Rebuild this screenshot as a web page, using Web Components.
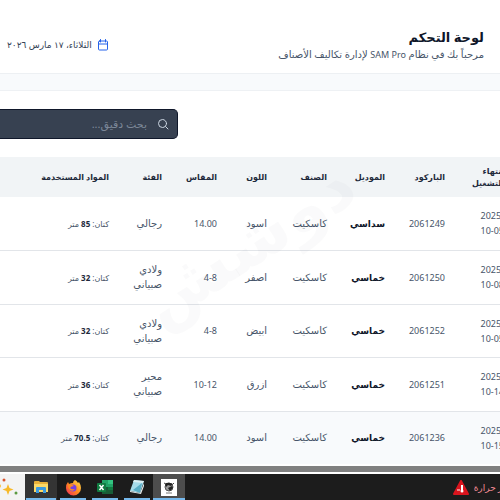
<!DOCTYPE html>
<html lang="ar" dir="rtl">
<head>
<meta charset="utf-8">
<title>لوحة التحكم</title>
<style>
  html, body {
    margin: 0;
    height: 100%;
    overflow: hidden;
  }
  body {
    font-family: "Noto Sans", "DejaVu Sans", sans-serif;
    font-size: 10px;
    color: #475569;
    background: #fff;
  }
  .latin {
    font-size: 9px;
  }
</style>
</head>
<body>
<app-shell>
  <page-header slot="header">
    <span slot="title">لوحة التحكم</span>
    <span slot="subtitle">مرحباً بك في نظام <span class="latin">SAM Pro</span> لإدارة تكاليف الأصناف</span>
    <span slot="date">الثلاثاء، ١٧ مارس ٢٠٢٦</span>
  </page-header>
  <search-box placeholder="بحث دقيق..."></search-box>
  <items-table></items-table>
  <task-bar slot="footer"></task-bar>
</app-shell>

<script>
/**
 * Creates a template from a markup string.
 *
 * @param {string} markup The markup.
 * @returns {HTMLTemplateElement} The template.
 */
const createTemplate = (markup) => {
  const template = document.createElement('template')
  template.innerHTML = markup
  return template
}

const shellTemplate = createTemplate(`
  <style>
    :host {
      display: flex;
      flex-direction: column;
      height: 100vh;
      background: #f8fafc;
    }
    main {
      flex: 1;
      min-height: 0;
      overflow: hidden;
      margin-top: 16px;
      border-top: 1px solid #eef1f4;
      background: #fff;
    }
  </style>
  <slot name="header"></slot>
  <main><slot></slot></main>
  <slot name="footer"></slot>
`)

/**
 * The frame of the page: header, content and footer.
 */
class AppShell extends HTMLElement {
  constructor () {
    super()
    this.attachShadow({ mode: 'open' })
    this.shadowRoot.appendChild(shellTemplate.content.cloneNode(true))
  }
}
customElements.define('app-shell', AppShell)

const headerTemplate = createTemplate(`
  <style>
    :host {
      display: block;
      background: #fff;
      border-bottom: 1px solid #edf0f3;
    }
    header {
      display: flex;
      align-items: center;
      justify-content: space-between;
      padding: 27px 16px 11px 7px;
    }
    h1 {
      margin: 0;
      font-size: 13px;
      line-height: 20px;
      font-weight: 700;
      color: #0f172a;
    }
    p {
      margin: 0;
      font-size: 10px;
      line-height: 14px;
    }
    .date {
      display: flex;
      align-items: center;
      gap: 5px;
      font-size: 9px;
      line-height: 14px;
      color: #334155;
    }
  </style>
  <header>
    <div>
      <h1><slot name="title"></slot></h1>
      <p><slot name="subtitle"></slot></p>
    </div>
    <div class="date">
      <svg width="12" height="12" viewBox="0 0 24 24" fill="none" stroke="#2563eb" stroke-width="2" stroke-linecap="round" stroke-linejoin="round"><path d="M7 1v5M17 1v5M3 10h18"/><rect x="3" y="4" width="18" height="18" rx="2"/></svg>
      <slot name="date"></slot>
    </div>
  </header>
`)

/**
 * The title, subtitle and date at the top of the page.
 */
class PageHeader extends HTMLElement {
  constructor () {
    super()
    this.attachShadow({ mode: 'open' })
    this.shadowRoot.appendChild(headerTemplate.content.cloneNode(true))
  }
}
customElements.define('page-header', PageHeader)

const searchTemplate = createTemplate(`
  <style>
    :host {
      display: flex;
      justify-content: flex-end;
      padding: 18px 0;
    }
    label {
      display: flex;
      align-items: center;
      gap: 10px;
      box-sizing: border-box;
      width: calc(36% - 2px);
      height: 30px;
      padding: 0 8px;
      border: 1px solid #0f172a;
      border-left: 0;
      border-radius: 0 5px 5px 0;
      background: #374151;
    }
    svg {
      flex: none;
    }
    input {
      flex: 1;
      min-width: 0;
      padding: 0;
      border: 0;
      outline: 0;
      background: none;
      font: inherit;
      font-size: 11px;
      line-height: 20px;
      color: #fff;
    }
    input::placeholder {
      color: #7c8798;
      opacity: 1;
    }
  </style>
  <label>
    <svg width="12" height="12" viewBox="0 0 24 24" fill="none" stroke="#cbd5e1" stroke-width="2" stroke-linecap="round"><circle cx="11" cy="11" r="8"/><path d="M17 17l5 5"/></svg>
    <input type="text">
  </label>
`)

/**
 * The search field above the table.
 */
class SearchBox extends HTMLElement {
  constructor () {
    super()
    this.attachShadow({ mode: 'open' })
    this.shadowRoot.appendChild(searchTemplate.content.cloneNode(true))
  }

  /**
   * Passes the placeholder on to the input.
   */
  connectedCallback () {
    const input = this.shadowRoot.querySelector('input')
    input.placeholder = this.getAttribute('placeholder')
    input.setAttribute('aria-label', input.placeholder)
  }
}
customElements.define('search-box', SearchBox)

const items = [
  ['2025-10-05', '2061249', 'سداسي', 'كاسكيت', 'اسود', '14.00', 'رجالي', '85'],
  ['2025-10-08', '2061250', 'خماسي', 'كاسكيت', 'اصفر', '4-8', 'ولادي صبياني', '32'],
  ['2025-10-05', '2061252', 'خماسي', 'كاسكيت', 'ابيض', '4-8', 'ولادي صبياني', '32'],
  ['2025-10-14', '2061251', 'خماسي', 'كاسكيت', 'ازرق', '10-12', 'محير صبياني', '36'],
  ['2025-10-15', '2061236', 'خماسي', 'كاسكيت', 'اسود', '14.00', 'رجالي', '70.5']
]

const tableTemplate = createTemplate(`
  <style>
    :host {
      display: block;
      position: relative;
      overflow: hidden;
    }
    /* the first column runs past the edge of the view */
    table {
      width: calc(100% + 16px);
      margin-right: -16px;
      border-collapse: collapse;
      table-layout: fixed;
    }
    .date { width: 59px; }
    .code, .item { width: 60px; }
    .model { width: 58px; }
    .colour { width: 50px; }
    .size { width: 55px; }
    .group { width: 53px; }
    th, td {
      box-sizing: border-box;
      padding: 0 12px;
      text-align: right;
      white-space: nowrap;
    }
    th {
      height: 40px;
      font-size: 8px;
      line-height: 12px;
      font-weight: 700;
      color: #1e293b;
      background: #f1f4f6;
    }
    td {
      height: 53px;
      border-bottom: 1px solid #e2e5e9;
      line-height: 15px;
    }
    tr:nth-child(even) td {
      height: 54px;
    }
    tr:last-child td {
      background: #f8fafc;
      border-bottom: 0;
    }
    th:first-child, td:first-child, td:nth-child(7) {
      white-space: normal;
    }
    td:nth-child(-n + 3), td:nth-child(6) {
      font-size: 9px;
    }
    td:nth-child(3) {
      font-weight: 700;
      color: #0f172a;
    }
    td:last-child {
      font-size: 8px;
    }
    b {
      color: #1e293b;
    }
    .mark {
      position: absolute;
      top: 44px;
      left: 126px;
      font-size: 68px;
      line-height: 80px;
      font-weight: 700;
      color: rgba(15, 23, 42, 0.02);
      transform: rotate(-33deg);
      pointer-events: none;
    }
  </style>
  <table>
    <colgroup><col class="date"><col class="code"><col class="model"><col class="item"><col class="colour"><col class="size"><col class="group"><col></colgroup>
    <thead>
      <tr><th>انتهاء التشغيل</th><th>الباركود</th><th>الموديل</th><th>الصنف</th><th>اللون</th><th>المقاس</th><th>الفئة</th><th>المواد المستخدمة</th></tr>
    </thead>
    <tbody></tbody>
  </table>
  <div class="mark">دوشش</div>
`)

/**
 * The table of items.
 */
class ItemsTable extends HTMLElement {
  constructor () {
    super()
    this.attachShadow({ mode: 'open' })
    this.shadowRoot.appendChild(tableTemplate.content.cloneNode(true))
  }

  /**
   * Renders one row for each item.
   */
  connectedCallback () {
    this.shadowRoot.querySelector('tbody').innerHTML = items.map(([date, code, model, item, colour, size, group, amount]) => `
      <tr>
        <td><bdi dir="ltr">${date.slice(0, 5)}</bdi><br><bdi dir="ltr">${date.slice(5)}</bdi></td>
        <td>${code}</td>
        <td>${model}</td>
        <td>${item}</td>
        <td>${colour}</td>
        <td><bdi dir="ltr">${size}</bdi></td>
        <td>${group}</td>
        <td>كتان: <b>${amount}</b> متر</td>
      </tr>`).join('')
  }
}
customElements.define('items-table', ItemsTable)

const taskBarTemplate = createTemplate(`
  <style>
    :host {
      display: block;
      direction: ltr;
      border-top: 6px solid #808080;
    }
    nav {
      display: flex;
      height: 26px;
      border-top: 2px solid #fff;
      background: #1c1c1c;
    }
    button {
      display: flex;
      align-items: center;
      justify-content: center;
      box-sizing: border-box;
      width: 32px;
      padding: 0;
      border: 0;
      background: linear-gradient(#76b9ed, #76b9ed) bottom / 26px 2px no-repeat;
    }
    .deco {
      width: 25px;
      background: #f3f3f3;
    }
    .first { background-color: #343434; background-size: 30px 2px; }
    .open { background-color: #4d4d4d; background-size: 32px 2px; }
    .alert {
      display: flex;
      align-items: center;
      gap: 5px;
      margin-left: auto;
      margin-right: -16px;
      font-size: 9px;
      color: #f08a94;
    }
  </style>
  <nav>
    <button class="deco" aria-label="Highlights"><svg width="25" height="26" viewBox="0 0 25 26"><path d="M8 10l1.500 4 4 1.500-4 1.500-1.500 4-1.500-4-4-1.500 4-1.500z" fill="#f7b928"/><path d="M0 10l1 2-1 2z" fill="#f7b928"/><circle cx="4" cy="6" r="1.500" fill="#d9532c"/><circle cx="16" cy="19" r="1.500" fill="#5b9a42"/></svg></button>
    <button class="first" aria-label="Files"><svg width="16" height="16" viewBox="0 0 16 16"><path d="M1 3q0-1 1-1h4l1 1h7q1 0 1 1v9H1z" fill="#e9b13a"/><path d="M1 5h14v8H1z" fill="#fbd968"/><path d="M3 14V9q0-1 1-1h8q1 0 1 1v5h-3v-3H6v3z" fill="#3b9be0"/></svg></button>
    <button aria-label="Firefox"><svg width="17" height="17" viewBox="0 0 17 17"><defs><linearGradient id="fox" x1="1" x2="0" y2="1"><stop stop-color="#ffe14d"/><stop offset=".5" stop-color="#ff8a1f"/><stop offset="1" stop-color="#f0245f"/></linearGradient></defs><path d="M10 1q2 1 3 3l1-1q2 3 2 6a7 7 0 01-15 0q0-4 2-6l1 2q2-1 4-1Q8 2 10 1z" fill="url(#fox)"/><circle cx="8" cy="9" r="3.500" fill="#7542e5"/><path d="M3 6q3-2 6 1-3 0-4 2 2 2 5 1-2 3-5 1-2-2-2-5z" fill="#ff8a1f"/></svg></button>
    <button aria-label="Excel"><svg width="17" height="16" viewBox="0 0 17 16"><path d="M5 1h6v7H5z" fill="#21a366"/><path d="M11 1h5v4h-5z" fill="#33c481"/><path d="M11 5h5v3h-5z" fill="#21a366"/><path d="M5 8h11v7H5z" fill="#185c37"/><path d="M11 8h5v3h-5z" fill="#107c41"/><rect y="4" width="9" height="9" rx="1" fill="#107c41"/><path d="M2.500 6l4 5M6.500 6l-4 5" stroke="#fff" stroke-width="1.500"/></svg></button>
    <button aria-label="Notepad"><svg width="16" height="16" viewBox="0 0 16 16"><path d="M5 1l10 1-4 12-10-2z" fill="#a5dbea"/><path d="M5 1l10 1-1 2-10-1z" fill="#dceff4"/><path d="M4 11L13 4l-2 10z" fill="#5aaec6"/><path d="M1 12l10 2 4-10v3l-3 8-11-2z" fill="#e8eef0"/></svg></button>
    <button class="open" aria-label="SAM Pro"><svg width="16" height="17" viewBox="0 0 16 17"><path d="M0 0h16v17H0z" fill="#fff"/><circle cx="8" cy="8" r="4" fill="#999" stroke="#555"/><path d="M4 5q2-2 5-1l3 1-2 2-3-1-2 2zM7 9l4-2 1 2-3 3z" fill="#222"/><path d="M3 4l2 1M13 4l-1 1" stroke="#444"/><path d="M5 14h6" stroke="#777"/></svg></button>
    <div class="alert">
      <svg width="16" height="15" viewBox="0 0 16 15"><path d="M8 1l7 13H1z" fill="#d9151e" stroke="#d9151e" stroke-width="2" stroke-linejoin="round"/><path d="M9 5v5" stroke="#fff" stroke-width="2"/><circle cx="9" cy="11" r="1.500" fill="#fff"/><path d="M4 10h3" stroke="#fff"/></svg>
      <span dir="rtl">خطر حرارة</span>
    </div>
  </nav>
`)

/**
 * The bar with the open programs.
 */
class TaskBar extends HTMLElement {
  constructor () {
    super()
    this.attachShadow({ mode: 'open' })
    this.shadowRoot.appendChild(taskBarTemplate.content.cloneNode(true))
  }
}
customElements.define('task-bar', TaskBar)
</script>
</body>
</html>
